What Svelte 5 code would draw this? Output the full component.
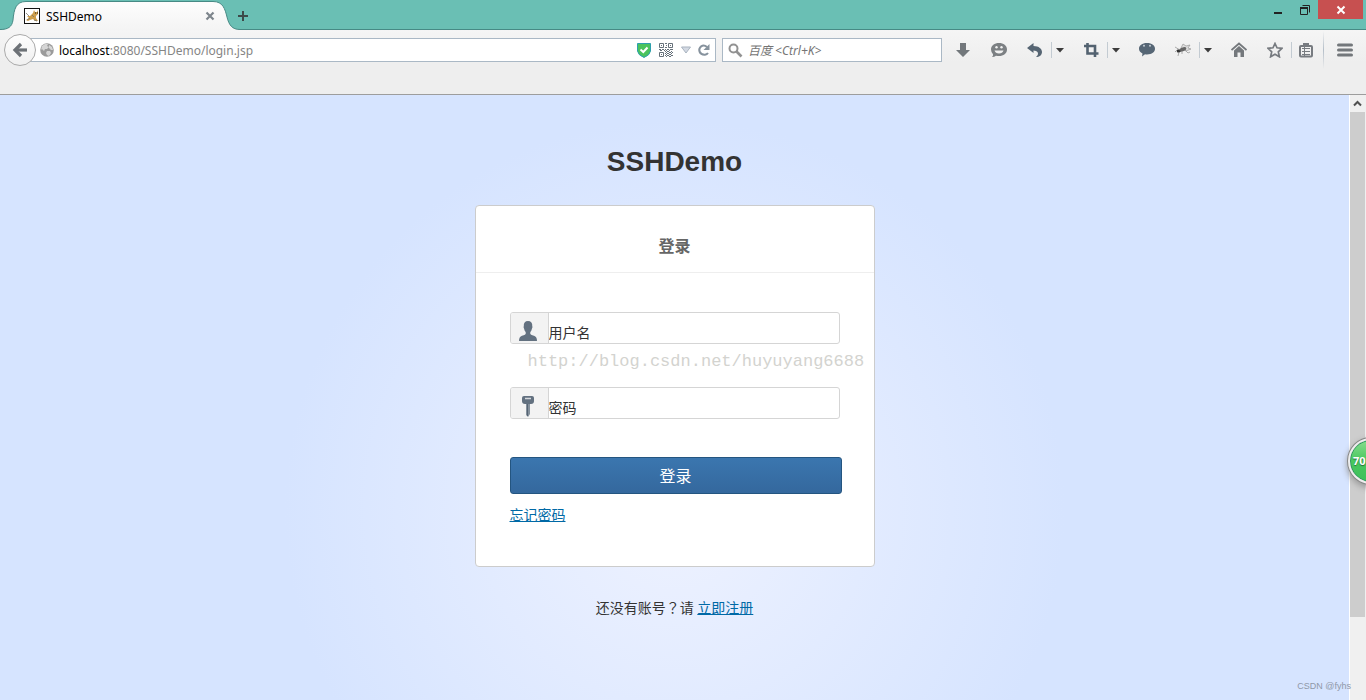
<script>
	let username = '';
	let password = '';
	let search = '';
</script>

<div class="browser">
	<header class="titlebar">
		<div class="tab">
			<svg class="tab-shape" width="248" height="30" viewBox="0 0 248 30" aria-hidden="true">
				<defs>
					<linearGradient id="tabFill" x1="0" y1="0" x2="0" y2="1">
						<stop offset="0" stop-color="#fdfdfd" />
						<stop offset="1" stop-color="#f4f4f4" />
					</linearGradient>
				</defs>
				<path d="M0 30V29.500C8 29.500 12 27 13 20C14 9 16 1.500 26 1.500H213C223 1.500 225 9 227 17C229 25 232 29.500 240 29.500V30Z" fill="url(#tabFill)" />
				<path d="M0 29.500C8 29.500 12 27 13 20C14 9 16 1.500 26 1.500H213C223 1.500 225 9 227 17C229 25 232 29.500 240 29.500H248" fill="none" stroke="#478a85" />
			</svg>
			<svg class="favicon" width="16" height="16" viewBox="0 0 16 16" aria-hidden="true">
				<rect x=".5" y=".5" width="15" height="15" fill="#fff" stroke="#111" />
				<path d="M2 12L5 10L3 8L6 8L9 5L10 2L11 4H13L14 2V6L12 8V10L14 13H11L9 11L6 12L4 13Z" fill="#d0a04c" />
				<path d="M2 5L5 8M3 12L6 10M8 7L10 9M10 12L13 13" stroke="#77736a" stroke-width=".8" />
				<path d="M11 5h1M13 5h1" stroke="#222" />
			</svg>
			<span class="tab-title">SSHDemo</span>
			<button class="tab-close" aria-label="Close tab">
				<svg width="10" height="10" viewBox="0 0 10 10"><path d="M1.500 1.500L8.500 8.500M8.500 1.500L1.500 8.500" stroke="#7d858c" stroke-width="2.200" /></svg>
			</button>
		</div>
		<button class="new-tab" aria-label="New tab">
			<svg width="12" height="12" viewBox="0 0 12 12"><path d="M6 1V11M1 6H11" stroke="#3d4a49" stroke-width="2" /></svg>
		</button>
		<div class="window-buttons">
			<button aria-label="Minimize">
				<svg width="12" height="12" viewBox="0 0 12 12"><path d="M2 9H10" stroke="#222" stroke-width="2" /></svg>
			</button>
			<button aria-label="Restore">
				<svg width="12" height="12" viewBox="0 0 12 12" fill="none" stroke="#222"><path d="M1.500 4V10.500H8.500V4M3.500 1.500H10.500V8.500" /><path d="M1 4H9" stroke-width="2" /></svg>
			</button>
			<button class="close" aria-label="Close">
				<svg width="10" height="10" viewBox="0 0 10 10"><path d="M1.500 1.500L8.500 8.500M8.500 1.500L1.500 8.500" stroke="#fff" stroke-width="2" /></svg>
			</button>
		</div>
	</header>

	<div class="toolbar">
		<nav class="nav-row">
			<button class="back" aria-label="Back">
				<svg width="16" height="16" viewBox="0 0 16 16" fill="none" stroke="#6c7176"><path d="M3 8H15" stroke-width="3.200" /><path d="M9 2L3 8L9 14" stroke-width="3.200" /></svg>
			</button>
			<div class="address">
				<svg width="14" height="14" viewBox="0 0 14 14" aria-hidden="true">
					<circle cx="7" cy="7" r="6.800" fill="#9b9b9b" />
					<path d="M2 3L5 1L8 1L7 3L9 4L7 6L5 6L4 8L2 6L1 7ZM9 2L12 4L13 7L11 7L9 5ZM7 8L10 8L11 10L9 13L7 12L6 10Z" fill="#d5d5d5" />
				</svg>
				<a class="url" href="#login"><b>localhost</b>:8080/SSHDemo/login.jsp</a>
				<svg width="14" height="15" viewBox="0 0 14 15" aria-hidden="true">
					<path d="M.5.500H13.500V8Q13 12 7 14.500Q1 12 .5 8Z" fill="#4bc35d" stroke="#2d9fae" />
					<path d="M3.500 6.500L6.300 9L10.500 4.500" fill="none" stroke="#fff" stroke-width="2" />
				</svg>
				<svg width="14" height="14" viewBox="0 0 14 14" fill="none" stroke="#66717a" aria-hidden="true">
					<path d="M.5.500h4v4h-4zM9.500.500h4v4h-4zM.5 9.500h4v4h-4z" />
					<path d="M2 2.500h1M11 2.500h1M2 11.500h1M6 .5h2M7 2.500h1M6 4.500h2M0 6.500h2M3 6.500h2M6 6.500h1M8 6.500h2M11 6.500h3M1 7.500h2M5 7.500h1M7 7.500h1M10 7.500h1M6 8.500h1M8 8.500h2M12 8.500h1M7 9.500h1M10 9.500h2M13 9.500h1M6 10.500h1M8 10.500h2M12 10.500h1M7 11.500h1M10 11.500h2M6 12.500h1M8 12.500h2M12 12.500h2M7 13.500h1M10 13.500h2" />
				</svg>
				<svg width="10" height="8" viewBox="0 0 10 8" aria-hidden="true"><path d="M.5 1H9.500L5 7Z" fill="#d3d9e3" stroke="#a9b3bf" /></svg>
				<button class="reload" aria-label="Reload">
					<svg width="14" height="14" viewBox="0 0 14 14"><path d="M10 4Q7 1.500 4.200 3.300Q1.500 5.500 2.500 8.500Q4 12 8 11.700Q10 11.400 11 10" fill="none" stroke="#86929d" stroke-width="2" /><path d="M12.500 1V7H6.500Z" fill="#86929d" /></svg>
				</button>
			</div>
			<div class="search">
				<svg width="15" height="15" viewBox="0 0 15 15" fill="none" stroke="#929292" aria-hidden="true"><circle cx="5.500" cy="5.500" r="4" stroke-width="2" /><path d="M8.500 8.500L13.500 13.500" stroke-width="2.600" /></svg>
				<input type="text" bind:value={search} aria-label="Search" placeholder="百度 <Ctrl+K>" />
			</div>
			<div class="tools">
				<button aria-label="Downloads">
					<svg width="16" height="16" viewBox="0 0 16 16"><path d="M5 1H11V8H15L8 15L1 8H5Z" fill="#72777b" /></svg>
				</button>
				<button aria-label="Chat">
					<svg width="16" height="16" viewBox="0 0 16 16"><path d="M8 1C12.500 1 16 3.500 16 7.500S12.500 14 8 14Q6.500 14 5 13.700Q3.500 15 1 15Q2.500 13.500 2 12.200Q0 10 0 7.500C0 3.500 3.500 1 8 1Z" fill="#7c8083" /><circle cx="5.500" cy="5.300" r="1.200" fill="#f2f2f2" /><circle cx="10.500" cy="5.300" r="1.200" fill="#f2f2f2" /><path d="M3.500 8.500H12.500Q11.500 11.500 8 11.500T3.500 8.500Z" fill="#f2f2f2" /></svg>
				</button>
				<button aria-label="Undo">
					<svg width="16" height="16" viewBox="0 0 16 16"><path d="M0 6L6.500 1V4C12 4 15 7 15 10C15 13 12.500 15 9 15C11 13.500 11.500 11.500 10.500 10Q9.500 8.500 6.500 8.500V11Z" fill="#566573" /></svg>
				</button>
				<button class="caret split" aria-label="Undo menu"><svg width="8" height="5" viewBox="0 0 8 5"><path d="M0 0H8L4 4.500Z" fill="#3c3c3c" /></svg></button>
				<button aria-label="Screenshot">
					<svg width="16" height="16" viewBox="0 0 16 16" fill="none" stroke="#536270" stroke-width="2.600"><path d="M4.500 1V11.500H15.500M1 4H12V15" /></svg>
				</button>
				<button class="caret split" aria-label="Screenshot menu"><svg width="8" height="5" viewBox="0 0 8 5"><path d="M0 0H8L4 4.500Z" fill="#3c3c3c" /></svg></button>
				<button aria-label="Messages">
					<svg width="16" height="16" viewBox="0 0 16 16"><path d="M8 1C13 1 16 3.500 16 6.800S13 12.500 8 12.500Q7 12.500 6 12.300L3 14.500L3.500 11.500Q0 9.800 0 6.800C0 3.500 3 1 8 1Z" fill="#566675" /><circle cx="5" cy="3.800" r="1" fill="#c3ccd3" /><circle cx="11" cy="3.800" r="1" fill="#c3ccd3" /></svg>
				</button>
				<button aria-label="Inspector">
					<svg width="16" height="16" viewBox="0 0 16 16"><path d="M6 6L8 2L11 4L15 3L13 6L16 7L11 9Z" fill="#ddd" stroke="#999" stroke-width=".7" /><ellipse cx="7.500" cy="7.500" rx="4" ry="1.800" transform="rotate(-22 7.500 7.500)" fill="#666" /><circle cx="3.500" cy="9" r="1.800" fill="#333" /><path d="M0 5L5 8M2 8L0 10M4 10L3 14M7 9L7 12M10 8L13 11L15 10" fill="none" stroke="#999" stroke-width=".8" /></svg>
				</button>
				<button class="caret split" aria-label="Inspector menu"><svg width="8" height="5" viewBox="0 0 8 5"><path d="M0 0H8L4 4.500Z" fill="#3c3c3c" /></svg></button>
				<button aria-label="Home">
					<svg width="16" height="16" viewBox="0 0 16 16"><path d="M.5 8L8 1.500L15.500 8" fill="none" stroke="#74787c" stroke-width="1.800" /><path d="M3 8.500L8 4L13 8.500V15H9.500V10.500H6.500V15H3Z" fill="#74787c" /></svg>
				</button>
				<button aria-label="Bookmark">
					<svg width="16" height="16" viewBox="0 0 16 16"><path d="M8 1.500L10 5.800L15 6.300L11.300 9.800L12.400 14.800L8 12.200L3.600 14.800L4.700 9.800L1 6.300L6 5.800Z" fill="none" stroke="#777b80" stroke-width="1.700" /></svg>
				</button>
				<button class="split list" aria-label="Bookmarks list">
					<svg width="16" height="16" viewBox="0 0 16 16" fill="none" stroke="#777b80"><rect x="2" y="4" width="12" height="10.500" rx="1" stroke-width="2" /><path d="M5 2.500H11" stroke-width="3" /><path d="M4 6.500H12M4 9.500H12M4 12.500H12M6.500 5V14" /></svg>
				</button>
				<span class="divider"></span>
				<button aria-label="Menu">
					<svg width="16" height="14" viewBox="0 0 16 14"><path d="M1.500 2H14.500M1.500 7H14.500M1.500 12H14.500" stroke="#73777b" stroke-width="3" stroke-linecap="round" /></svg>
				</button>
			</div>
		</nav>
	</div>

	<div class="content">
		<main>
			<h1>SSHDemo</h1>
			<section class="card">
				<h2>登录</h2>
				<form on:submit|preventDefault>
					<div class="field">
						<label for="username" aria-label="用户名">
							<svg width="20" height="22" viewBox="0 0 20 22"><path d="M10 0C13 0 14.500 2 14.200 5Q14.800 6 14 7.500Q13.500 10 12.300 11V13Q13 14 16 14.800Q19 15.700 19 20H1Q1 15.700 4 14.800Q7 14 7.700 13V11Q6.500 10 6 7.500Q5.200 6 5.800 5C5.500 2 7 0 10 0Z" fill="#637180" /></svg>
						</label>
						<input id="username" type="text" placeholder="用户名" bind:value={username} />
					</div>
					<p class="watermark">http://blog.csdn.net/huyuyang6688</p>
					<div class="field">
						<label for="password" aria-label="密码">
							<svg width="20" height="22" viewBox="0 0 20 22"><path d="M6 0H14Q16 0 16 2V5Q16 8 13 8H7Q4 8 4 5V2Q4 0 6 0Z" fill="#637180" /><path d="M7 2.500H13" stroke="#d5d9dd" stroke-width="1.500" /><path d="M8 8H12V18L10 21L8 19Z" fill="#84909c" /><path d="M9.500 8V20" stroke="#566473" /></svg>
						</label>
						<input id="password" type="password" placeholder="密码" bind:value={password} />
					</div>
					<button class="submit" type="submit">登录</button>
					<a href="#forgot">忘记密码</a>
				</form>
			</section>
			<p class="register">还没有账号<span lang="zh-TW">？</span>请 <a href="#register">立即注册</a></p>
		</main>
		<div class="scrollbar">
			<button aria-label="Scroll up">
				<svg width="9" height="7" viewBox="0 0 9 7"><path d="M1 5.500L4.500 2L8 5.500" fill="none" stroke="#505050" stroke-width="2" /></svg>
			</button>
			<div class="thumb"></div>
		</div>
		<div class="meter">70</div>
		<span class="credit">CSDN @fyhs</span>
	</div>
</div>

<style>
	:global(body) {
		margin: 0;
		font-family: "Noto Sans", "Noto Sans CJK SC", sans-serif;
	}

	button {
		display: flex;
		align-items: center;
		justify-content: center;
		padding: 0;
		border: 0;
		background: none;
		font-family: inherit;
	}

	svg {
		display: block;
		flex-shrink: 0;
	}

	.browser {
		display: flex;
		flex-direction: column;
		height: 100vh;
		overflow: hidden;
	}

	.titlebar {
		display: flex;
		height: 30px;
		box-sizing: border-box;
		background: #6abfb4;
		box-shadow: inset 0 -1px #478a85;
	}

	.tab {
		position: relative;
		display: flex;
		align-items: center;
		width: 232px;
		box-sizing: border-box;
		padding: 2px 17px 0 24px;
		gap: 6px;
	}

	.tab-shape {
		position: absolute;
		left: 0;
		top: 0;
	}

	.favicon,
	.tab-title,
	.tab-close {
		position: relative;
	}

	.tab-title {
		flex: 1;
		font-size: 12px;
		color: #000;
	}

	.new-tab {
		width: 22px;
		padding-top: 2px;
	}

	.window-buttons {
		display: flex;
		align-items: flex-start;
		margin-left: auto;
		margin-right: 3px;
	}

	.window-buttons button {
		width: 27px;
		height: 19px;
	}

	.window-buttons .close {
		width: 45px;
		background: #c75050;
	}

	.toolbar {
		height: 60px;
		padding-top: 4px;
		border-bottom: 1px solid #9d9d9d;
		background: linear-gradient(#f5f5f5, #eee 50%);
	}

	.nav-row {
		display: flex;
		align-items: center;
		height: 32px;
		padding: 0 5px 0 4px;
	}

	.back {
		position: relative;
		z-index: 1;
		width: 32px;
		height: 32px;
		flex-shrink: 0;
		border: 1px solid #aaa;
		border-radius: 50%;
		background: linear-gradient(#fdfdfd, #f0f0f0);
	}

	.address,
	.search {
		display: flex;
		align-items: center;
		height: 24px;
		box-sizing: border-box;
		border: 1px solid #aab8c5;
		background: #fff;
	}

	.address {
		flex: 1;
		min-width: 0;
		margin-left: -8px;
		padding: 0 4px 0 11px;
		gap: 8px;
	}

	.url {
		flex: 1;
		margin-left: -3px;
		font-size: 12px;
		color: #858585;
		text-decoration: none;
		white-space: nowrap;
		overflow: hidden;
	}

	.url b {
		font-weight: 400;
		color: #000;
	}

	.reload {
		margin-left: -2px;
	}

	.search {
		width: 220px;
		margin-left: 6px;
		padding: 0 5px;
		gap: 5px;
	}

	.search input {
		flex: 1;
		min-width: 0;
		padding: 0;
		border: 0;
		outline: 0;
		font: italic 12px "Noto Sans", "Noto Sans CJK SC", sans-serif;
	}

	.search input::placeholder {
		color: #757575;
	}

	.tools {
		display: flex;
		align-items: center;
		margin-left: 5px;
	}

	.tools button {
		width: 32px;
		height: 16px;
		margin-right: 4px;
	}

	.tools button:has(+ .split) {
		margin-right: 0;
	}

	.tools .split {
		border-left: 1px solid #c3cbd2;
	}

	.tools .caret {
		width: 17px;
		margin-right: 7px;
	}

	.tools .list {
		width: 28px;
	}

	.divider {
		width: 1px;
		height: 38px;
		margin-right: 5px;
		background: linear-gradient(transparent, #b4bec8, transparent);
	}

	.tools button:last-child {
		margin-right: 0;
	}

	.content {
		position: relative;
		display: flex;
		flex: 1;
		min-height: 0;
		overflow: hidden;
	}

	main {
		display: flex;
		flex: 1;
		flex-direction: column;
		align-items: center;
		background: #d6e3ff radial-gradient(circle 390px at 50% 415px, #eef2ff, #d6e4ff);
		color: #333;
		font-size: 14px;
	}

	h1 {
		margin: 51px 0 27px;
		font: bold 28px/32px "Liberation Sans", Arial, sans-serif;
	}

	.card {
		width: 400px;
		box-sizing: border-box;
		border: 1px solid #ccc;
		border-radius: 4px;
		background: #fff;
	}

	h2 {
		margin: 0;
		padding: 28px 0 14px;
		border-bottom: 1px solid #eee;
		color: #666;
		font-size: 16px;
		line-height: 24px;
		text-align: center;
	}

	form {
		padding: 39px 32px 40px 34px;
	}

	.field {
		display: flex;
		width: 330px;
		height: 32px;
		box-sizing: border-box;
		border: 1px solid #d5d5d5;
		border-radius: 3px;
		overflow: hidden;
	}

	.field label {
		display: flex;
		align-items: flex-end;
		justify-content: center;
		width: 38px;
		padding-right: 2px;
		box-sizing: border-box;
		border-right: 1px solid #d5d5d5;
		background: #f3f3f3;
	}

	.field input {
		flex: 1;
		min-width: 0;
		padding: 7px 0 0;
		border: 0;
		outline: 0;
		background: none;
		color: #333;
		font-family: "Noto Sans CJK SC", sans-serif;
		font-size: 14px;
	}

	.field input::placeholder {
		color: #333;
		opacity: 1;
	}

	.watermark {
		margin: 0 0 7px 18px;
		color: #d3d3cf;
		font: 17px/36px "Liberation Mono", monospace;
		white-space: nowrap;
	}

	.submit {
		width: 100%;
		height: 37px;
		margin: 38px 0 10px;
		padding-bottom: 2px;
		border: 1px solid #245580;
		border-radius: 3px;
		background: linear-gradient(#3b76af, #34689d);
		color: #fff;
		font-size: 16px;
	}

	a {
		color: #0069a6;
	}

	form a {
		display: block;
		width: max-content;
		line-height: 22px;
	}

	.register {
		margin: 29px 0 0;
		line-height: 22px;
	}

	.register span {
		font-family: "Noto Sans CJK TC", sans-serif;
	}

	.scrollbar {
		width: 15px;
		border-left: 1px solid #fff;
		padding-right: 1px;
		background: #f0f0f0;
	}

	.scrollbar button {
		width: 100%;
		height: 17px;
	}

	.thumb {
		height: 505px;
		background: #cdcdcd;
	}

	.meter {
		position: absolute;
		top: 345px;
		right: -26px;
		width: 42px;
		height: 42px;
		padding-left: 2px;
		box-sizing: border-box;
		border: 1px solid #27995a;
		border-radius: 50%;
		outline: 2px solid #eee;
		box-shadow: 0 0 0 3px #888, 0 3px 6px 3px #999;
		background: linear-gradient(#86dc8c, #48c75e 50%, #3fc05b);
		color: #fff;
		font-size: 11px;
		font-weight: bold;
		line-height: 40px;
		text-shadow: 0 1px 1px #276b35;
	}

	.credit {
		position: absolute;
		right: 15px;
		bottom: 7px;
		color: #8f98a8;
		font: 9px/14px "Liberation Sans", Arial, sans-serif;
	}
</style>
